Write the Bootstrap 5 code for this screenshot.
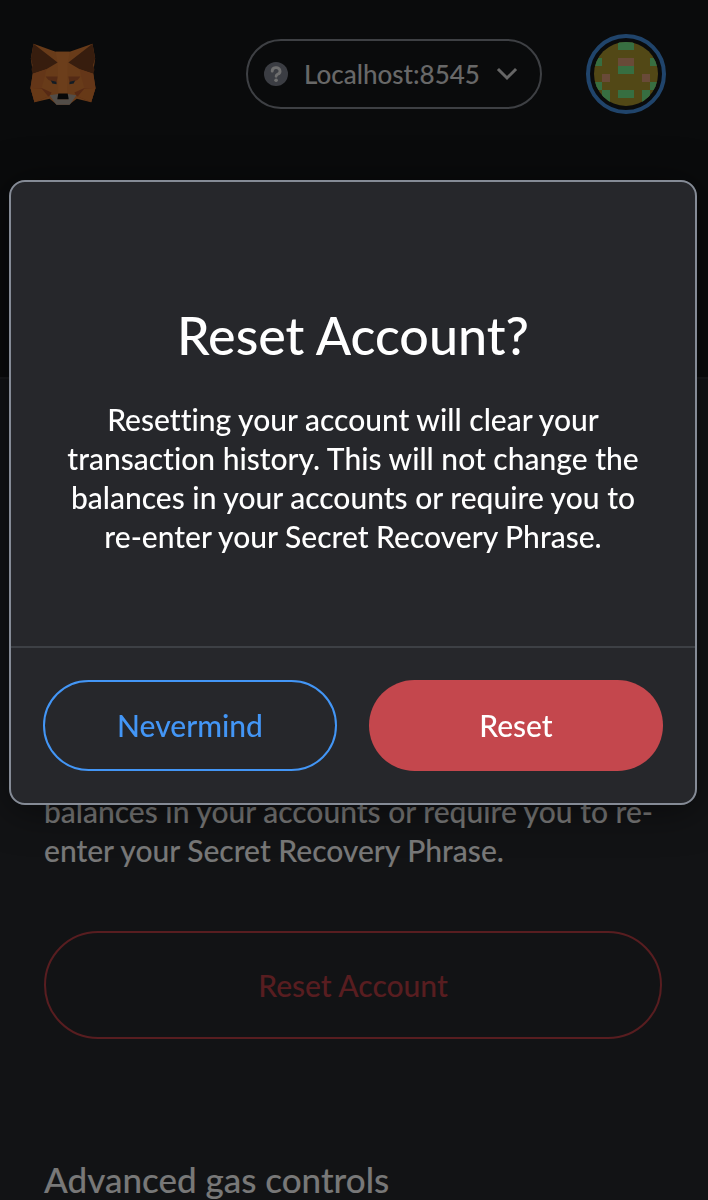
<!DOCTYPE html>
<html lang="en">
<head>
<meta charset="utf-8">
<meta name="viewport" content="width=device-width, initial-scale=1">
<title>Reset Account</title>
<link href="https://cdn.jsdelivr.net/npm/bootstrap@5.3.0/dist/css/bootstrap.min.css" rel="stylesheet">
<style>
body{font-family:Lato,"Open Sans",sans-serif;font-size:30px;line-height:39px;font-weight:500;font-variant-ligatures:none;color:#f0f0f0;background:#24272a;overflow:hidden}
.app-head{background:#141618;height:379px;padding:34px 42px 0 30px;border-bottom:2px solid #2e3135}
.head-row{height:80px}
.net-pill{width:296px;height:70px;border:2px solid #7c8088;color:#d0d0d0;font-size:26px;font-weight:500;margin-right:44px;padding:0 22px 0 16px}
.avatar{width:80px;height:80px;border:4px solid #4189d6;padding:4px;background:none}
.settings{padding:413px 46px 0 44px}
.settings p{margin-right:-2px;margin-bottom:61px}
.btn-line{font-size:30px;font-weight:500;height:108px;border:2px solid #b03a40;color:#b03a40}
.settings h2{font-size:35px;line-height:45px;font-weight:500;margin:118px 0 0}
.modal-dialog{max-width:none;margin:180px 11px 0 9px}
.modal-content{background:#26272b;border:2px solid #858b96;border-radius:16px;box-shadow:0 4px 40px rgba(0,0,0,.5);color:#fff}
.modal-body{padding:120px 48px 90px}
.modal-body h1{font-size:52px;line-height:67px;font-weight:500;margin-bottom:31px}
.modal-footer{border-top:2px solid #3d4045;padding:32px;gap:32px}
.modal-footer .btn{height:91px;font-size:30px;font-weight:500;border-width:2px}
.btn-never,.btn-never:hover{border-color:#4396f6;color:#4396f6}
.btn-reset,.btn-reset:hover{background:#c4474d;color:#fff}
</style>
</head>
<body>
<header class="app-head">
<div class="head-row d-flex align-items-center">
<svg class="me-auto" width="66" height="63" viewBox="30 24 196 188" role="img" aria-label="MetaMask">
<path fill="#d07632" d="M40 26L106 50H148L216 26L224 70L218 112L225 158L212 201L169 190L146 208H110L88 190L43 201L31 158L38 112L32 70Z"/>
<path fill="#d87c36" d="M106 50H148L142 84L140 176H114L112 84Z"/>
<path fill="#6f3a1c" d="M40 26L112 82L78 102L38 116L34 104L37 90L32 70ZM216 26L144 82L178 102L218 116L222 104L218 90L224 70Z"/>
<path fill="#c96c30" d="M38 116L78 102L74 124L64 158H31ZM218 116L178 102L182 124L192 158H225Z"/>
<path fill="#a8552a" d="M76 124H112L108 146L84 134ZM180 124H144L148 146L172 134Z"/>
<path fill="#ac5229" d="M31 158H64L94 172L88 182L43 201ZM225 158H192L162 172L168 182L212 201Z"/>
<path fill="#cf722f" d="M31 158L64 160L84 184L43 201ZM225 158L192 160L172 184L212 201Z"/>
<path fill="#263848" d="M92 136L108 140L109 147L96 145ZM164 136L148 140L147 147L160 145Z"/>
<path fill="#a59a90" d="M88 180L114 176V192H142V176L168 180L148 208H108Z"/>
<path fill="#111" d="M114 175H142L145 192H111Z"/>
</svg>
<button class="net-pill btn rounded-pill d-flex align-items-center">
<svg class="me-3" width="24" height="24" viewBox="0 0 24 24"><circle cx="12" cy="12" r="12" fill="#777b86"/><path d="M8.2 9.2a3.9 3.5 0 1 1 5.4 3.1c-1.1.6-1.5 1-1.5 2" fill="none" stroke="#ddd" stroke-width="2.8" stroke-linecap="round"/><circle cx="12.1" cy="18.2" r="1.8" fill="#ddd"/></svg>
<span class="flex-fill text-start text-nowrap">Localhost:8545</span>
<svg width="22" height="14" viewBox="0 0 22 14"><path d="M3 3l8 8 8-8" fill="none" stroke="#ccc" stroke-width="3" stroke-linecap="square"/></svg>
</button>
<button class="avatar rounded-circle" aria-label="Account"><svg class="rounded-circle d-block" width="64" height="64" viewBox="0 0 64 64" shape-rendering="crispEdges"><path fill="#a5912c" d="M0 0h64v64H0z"/><path fill="#6fdd82" d="M24 0h16v8H24zM0 16h8v8H0zM56 16h8v8h-8zM24 24h16v8H24zM0 40h8v8H0zM56 40h8v8h-8zM8 48h8v16H8zM48 48h8v16h-8zM24 48h16v8H24z"/><path fill="#d29470" d="M24 16h16v8H24zM8 32h8v8H8zM48 32h8v8h-8z"/></svg></button>
</div>
</header>
<main class="settings">
<p>balances in your accounts or require you to re-enter your Secret Recovery Phrase.</p>
<button class="btn btn-line rounded-pill w-100">Reset Account</button>
<h2>Advanced gas controls</h2>
</main>
<div class="modal-backdrop show"></div>
<div class="modal d-block overflow-hidden" role="dialog" aria-modal="true" aria-labelledby="dlg-title">
<div class="modal-dialog">
<div class="modal-content">
<div class="modal-body text-center">
<h1 id="dlg-title">Reset Account?</h1>
<p class="mb-0">Resetting your account will clear your transaction history. This will not change the balances in your accounts or require you to re-enter your Secret Recovery Phrase.</p>
</div>
<div class="modal-footer flex-nowrap">
<button class="btn btn-never rounded-pill flex-fill w-50 m-0">Nevermind</button>
<button class="btn btn-reset rounded-pill flex-fill w-50 m-0">Reset</button>
</div>
</div>
</div>
</div>
<script src="https://cdn.jsdelivr.net/npm/bootstrap@5.3.0/dist/js/bootstrap.bundle.min.js"></script>
</body>
</html>
